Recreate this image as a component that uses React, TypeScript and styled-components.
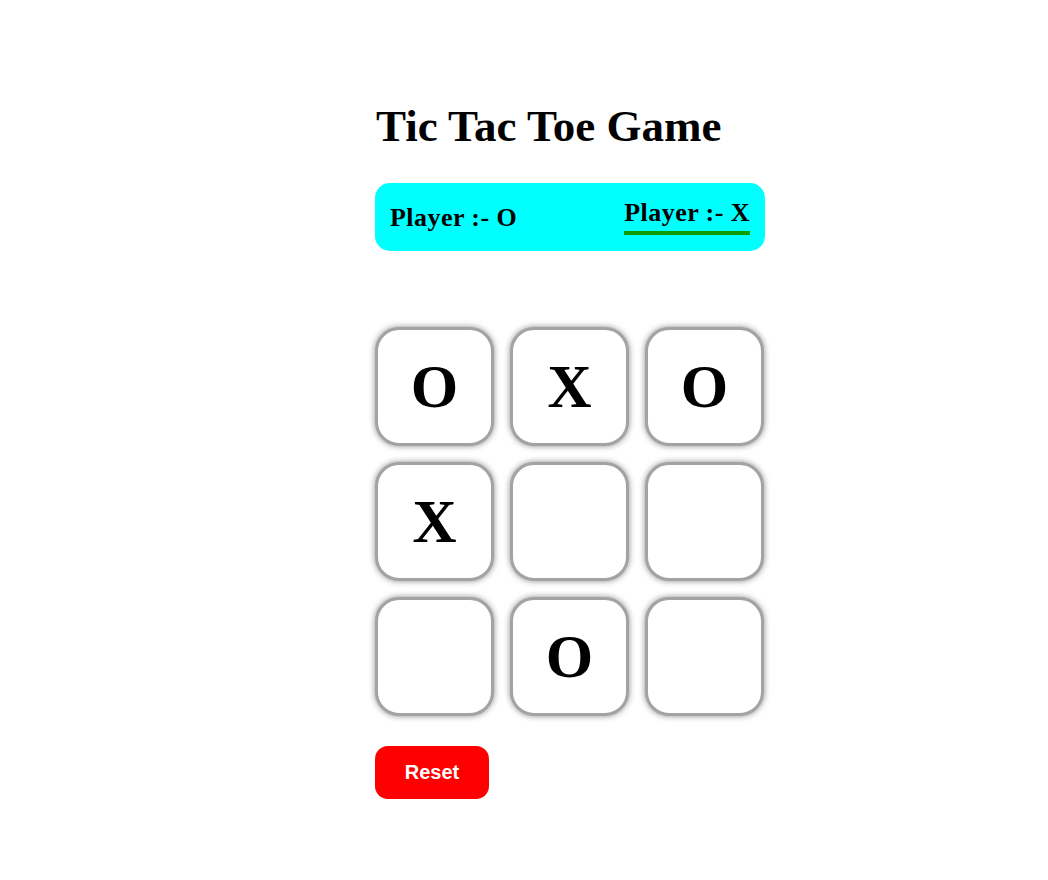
import React from "react";
import styled, { createGlobalStyle } from "styled-components";

const Global = createGlobalStyle`
  html, body { margin: 0; padding: 0; background: #ffffff; }
  body { font-family: "Liberation Serif", "Times New Roman", serif; color: #000; }
`;

const Page = styled.div`
  padding: 100px 0 0 375px;
  width: 390px;
`;

const Title = styled.h1`
  margin: 0 0 31px 1px;
  font-size: 45px;
  font-weight: bold;
  line-height: normal;
`;

const InfoBar = styled.div`
  background: #00ffff;
  border-radius: 15px;
  padding: 15px 15px 16px;
  display: flex;
  justify-content: space-between;
  align-items: center;
`;

const PlayerLabel = styled.div<{ $active?: boolean }>`
  font-size: 26px;
  font-weight: bold;
  line-height: normal;
  letter-spacing: 0.45px;
  padding-bottom: ${(p) => (p.$active ? "3px" : "0")};
  margin-top: ${(p) => (p.$active ? "0" : "2px")};
  border-bottom: ${(p) => (p.$active ? "4px solid #0f9d00" : "none")};
`;

const Board = styled.div`
  margin-top: 76px;
  display: grid;
  grid-template-columns: repeat(3, 119px);
  grid-auto-rows: 119px;
  gap: 16px;
`;

const Cell = styled.div`
  box-sizing: border-box;
  border: 3px solid #a3a3a3;
  border-radius: 24px;
  box-shadow: 0 0 6px rgba(0, 0, 0, 0.45);
  background: #fff;
  display: flex;
  align-items: center;
  justify-content: center;
  font-size: 61px;
  font-weight: bold;
  line-height: 1;
`;

const ResetButton = styled.button`
  margin-top: 30px;
  width: 114px;
  height: 53px;
  border: none;
  border-radius: 13px;
  background: #ff0000;
  color: #fff;
  font-family: "Liberation Sans", Arial, sans-serif;
  font-weight: bold;
  font-size: 20px;
  cursor: pointer;
`;

const board = ["O", "X", "O", "X", "", "", "", "O", ""];

export default function App() {
  return (
    <>
      <Global />
      <Page>
        <Title>Tic Tac Toe Game</Title>
        <InfoBar>
          <PlayerLabel>Player :- O</PlayerLabel>
          <PlayerLabel $active>Player :- X</PlayerLabel>
        </InfoBar>
        <Board>
          {board.map((v, i) => (
            <Cell key={i}>{v}</Cell>
          ))}
        </Board>
        <ResetButton>Reset</ResetButton>
      </Page>
    </>
  );
}
